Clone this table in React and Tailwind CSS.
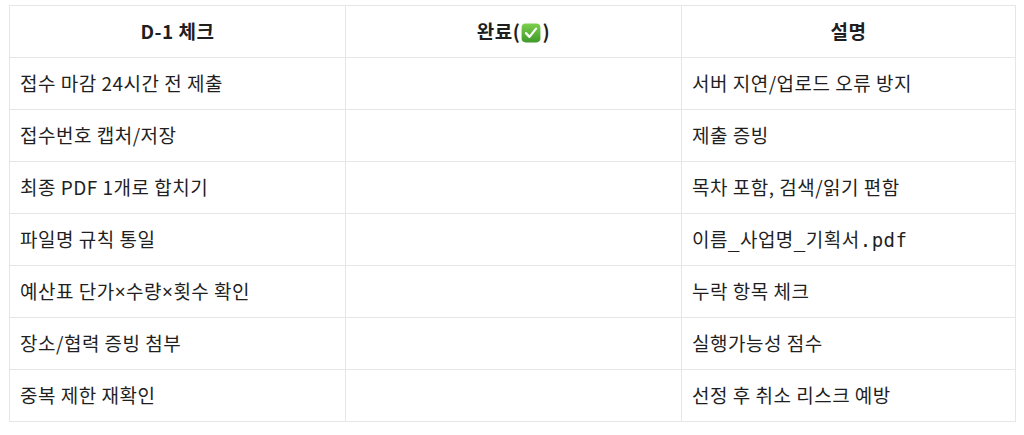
const rows = [
  ['접수 마감 24시간 전 제출', '', '서버 지연/업로드 오류 방지'],
  ['접수번호 캡처/저장', '', '제출 증빙'],
  ['최종 PDF 1개로 합치기', '', '목차 포함, 검색/읽기 편함'],
  ['파일명 규칙 통일', '', 'code'],
  ['times', '', '누락 항목 체크'],
  ['장소/협력 증빙 첨부', '', '실행가능성 점수'],
  ['중복 제한 재확인', '', '선정 후 취소 리스크 예방'],
]

function CheckEmoji() {
  return (
    <svg width="20" height="20" viewBox="0 0 17 17" className="inline-block align-[-4px] mx-[1px]">
      <defs>
        <linearGradient id="g" x1="0" y1="0" x2="0" y2="1">
          <stop offset="0" stopColor="#7bcf4a" />
          <stop offset="1" stopColor="#3f9a2a" />
        </linearGradient>
      </defs>
      <rect x="0.5" y="0.5" width="16" height="16" rx="3.5" fill="url(#g)" />
      <path d="M4.2 8.6 L7.2 11.8 L12.8 4.8" fill="none" stroke="#fff" strokeWidth="1.9" strokeLinecap="round" strokeLinejoin="round" />
    </svg>
  )
}

const X = () => <span className="font-['Noto_Sans',sans-serif]">×</span>

export default function App() {
  const font = { fontFamily: '"Noto Sans CJK KR", "Noto Sans", sans-serif' }
  return (
    <div className="w-[1024px] h-[435px] bg-white pt-[5px] pl-[9px]" style={font}>
      <table className="w-[1006px] border-collapse table-fixed text-[19px] tracking-[0.5px] text-[#1f1f1f]">
        <colgroup>
          <col className="w-[336px]" />
          <col className="w-[336px]" />
          <col className="w-[334px]" />
        </colgroup>
        <thead>
          <tr className="h-[52px]">
            <th className="border border-[#e6e6e6] font-bold text-center">D-1 체크</th>
            <th className="border border-[#e6e6e6] font-bold text-center">
              완료(<CheckEmoji />)
            </th>
            <th className="border border-[#e6e6e6] font-bold text-center">설명</th>
          </tr>
        </thead>
        <tbody>
          {rows.map(([a, b, c], i) => (
            <tr key={i} className="h-[52px]">
              <td className="border border-[#e6e6e6] px-[10px]">
                {a === 'times' ? (
                  <>
                    예산표 단가<X />수량<X />횟수 확인
                  </>
                ) : (
                  a
                )}
              </td>
              <td className="border border-[#e6e6e6] px-[10px]">{b}</td>
              <td className="border border-[#e6e6e6] px-[10px]">
                {c === 'code' ? (
                  <span className="font-['DejaVu_Sans_Mono','Noto_Sans_CJK_KR',monospace] text-[19px] tracking-[0.5px]">이름_사업명_기획서.pdf</span>
                ) : (
                  c
                )}
              </td>
            </tr>
          ))}
        </tbody>
      </table>
    </div>
  )
}
